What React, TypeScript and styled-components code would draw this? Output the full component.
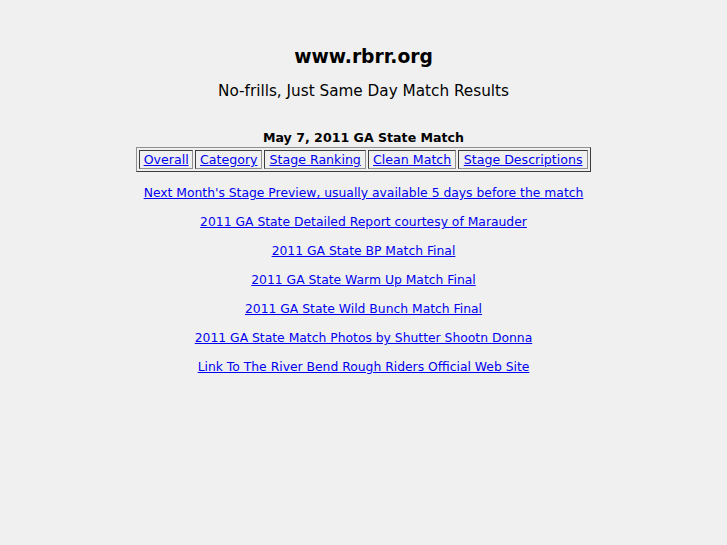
import React from "react";
import styled, { createGlobalStyle } from "styled-components";

const Global = createGlobalStyle`
  html, body { margin: 0; padding: 0; background: #f0f0f0; }
  body { font-family: "DejaVu Sans", sans-serif; color: #000; }
`;

const Page = styled.div`
  display: flex;
  flex-direction: column;
  align-items: center;
  padding-top: 46px;
`;

const Title = styled.h1`
  margin: 0;
  font-size: 18.72px;
  line-height: 22px;
  font-weight: bold;
`;

const Subtitle = styled.h2`
  margin: 14px 0 0;
  font-size: 15.25px;
  line-height: 18px;
  font-weight: normal;
`;

const MatchHeading = styled.h3`
  margin: 30px 0 0;
  font-size: 12.6px;
  line-height: 16px;
  font-weight: bold;
`;

const NavTable = styled.table`
  margin-top: 1px;
  border: 1px outset #909090;
  border-collapse: separate;
  border-spacing: 2px;
  width: 455px;
`;

const NavCell = styled.td`
  border: 1px inset #909090;
  padding: 1px 3px;
  font-size: 12.6px;
  line-height: 15px;
  text-align: center;
  white-space: nowrap;
`;

const Link = styled.a`
  color: #0000ee;
  text-decoration: underline;
`;

const LinkList = styled.div`
  display: flex;
  flex-direction: column;
  align-items: center;
  gap: 13px;
  margin-top: 13px;
`;

const LinkLine = styled.p`
  margin: 0;
  font-size: 12.35px;
  line-height: 16px;
`;

const nav = ["Overall", "Category", "Stage Ranking", "Clean Match", "Stage Descriptions"];
const links = [
  "Next Month's Stage Preview, usually available 5 days before the match",
  "2011 GA State Detailed Report courtesy of Marauder",
  "2011 GA State BP Match Final",
  "2011 GA State Warm Up Match Final",
  "2011 GA State Wild Bunch Match Final",
  "2011 GA State Match Photos by Shutter Shootn Donna",
  "Link To The River Bend Rough Riders Official Web Site",
];

export default function App() {
  return (
    <>
      <Global />
      <Page>
        <Title>www.rbrr.org</Title>
        <Subtitle>No-frills, Just Same Day Match Results</Subtitle>
        <MatchHeading>May 7, 2011 GA State Match</MatchHeading>
        <NavTable>
          <tbody>
            <tr>
              {nav.map((n) => (
                <NavCell key={n}>
                  <Link href="#">{n}</Link>
                </NavCell>
              ))}
            </tr>
          </tbody>
        </NavTable>
        <LinkList>
          {links.map((l) => (
            <LinkLine key={l}>
              <Link href="#">{l}</Link>
            </LinkLine>
          ))}
        </LinkList>
      </Page>
    </>
  );
}
